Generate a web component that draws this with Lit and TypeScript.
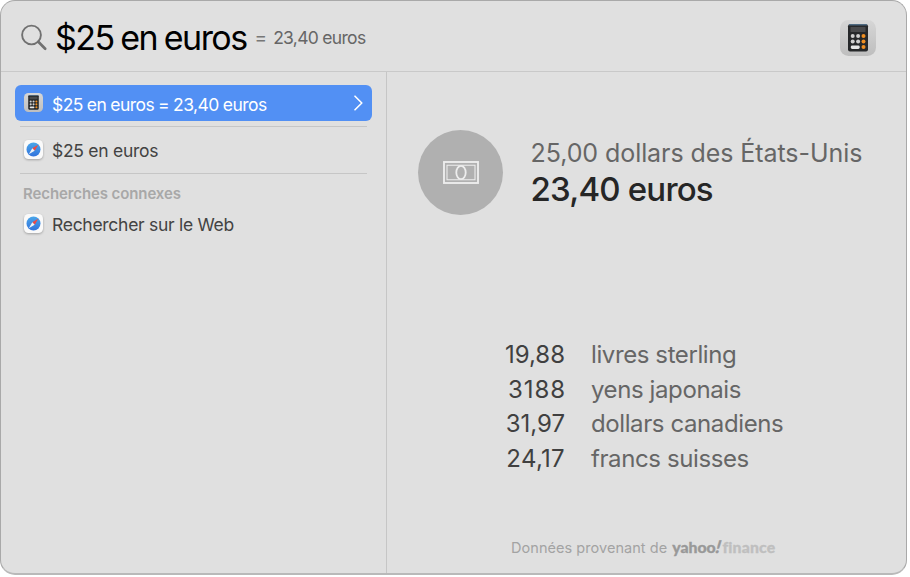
import { LitElement, html, css, svg } from "lit";
import { customElement, property } from "lit/decorators.js";

@customElement("calc-icon")
class CalcIcon extends LitElement {
  static styles = css`
    :host { display: block; flex: none; }
    svg { display: block; width: 100%; height: 100%; overflow: visible; }
  `;
  render() {
    const keys = [0, 1, 2].flatMap((r) =>
      [0, 1, 2].map((c) => {
        if (r === 2 && c < 2) {
          return c === 0
            ? svg`<rect x="10.8" y="25.4" width="8.9" height="3.6" rx="1.4" fill="#e6e6e6"/>`
            : null;
        }
        return svg`<circle cx=${12.7 + c * 5.4} cy=${16 + r * 5.5} r="2" fill=${c === 2 ? "#f08f22" : "#cfcfcf"}/>`;
      })
    );
    return html`<svg viewBox="0 0 36 36">
      <defs>
        <linearGradient id="plate" x1="0" y1="0" x2="0" y2="1">
          <stop offset="0" stop-color="#d6d6d6"/><stop offset="1" stop-color="#bebebe"/>
        </linearGradient>
      </defs>
      <rect x="0" y="0" width="36" height="36" rx="8.5" fill="url(#plate)"/>
      <rect x="8" y="4.2" width="20" height="27.4" rx="2" fill="#26282a"/>
      <rect x="9" y="4.2" width="18" height="1.2" fill="#4f6f8c"/>
      <rect x="10.5" y="7" width="15" height="5" rx="0.6" fill="#48494b"/>
      ${keys}
    </svg>`;
  }
}

@customElement("compass-icon")
class CompassIcon extends LitElement {
  static styles = css`
    :host { display: block; flex: none; }
    svg { display: block; width: 100%; height: 100%; overflow: visible; filter: drop-shadow(0 1px 1px rgba(0, 0, 0, 0.28)); }
  `;
  render() {
    return html`<svg viewBox="0 0 19 19">
      <defs>
        <linearGradient id="dial" x1="0" y1="0" x2="0" y2="1">
          <stop offset="0" stop-color="#4aa6ea"/><stop offset="1" stop-color="#3173dc"/>
        </linearGradient>
      </defs>
      <rect x="0" y="0" width="19" height="19" rx="4.4" fill="#fafafa"/>
      <circle cx="9.5" cy="9.5" r="7" fill="url(#dial)"/>
      <path d="M14.2 4.8 8.3 8.3 10.7 10.7Z" fill="#ee4a44"/>
      <path d="M4.8 14.2 8.3 8.3 10.7 10.7Z" fill="#eef2f6"/>
    </svg>`;
  }
}

@customElement("result-row")
class ResultRow extends LitElement {
  @property() label = "";
  @property() icon = "web";
  @property({ type: Boolean, reflect: true }) selected = false;

  static styles = css`
    :host { display: flex; align-items: center; height: 36px; padding: 0 9px; border-radius: 6px; color: #434343; }
    :host([selected]) { background: #5290f4; color: #fff; }
    .icon { width: 19px; height: 19px; margin: 0 9px 1px 0; }
    .label { flex: 1; font-size: 17.5px; letter-spacing: -0.28px; white-space: nowrap; }
    :host([selected]) .label { letter-spacing: -0.55px; word-spacing: -0.4px; padding-top: 2px; }
    .chevron { width: 9px; height: 16px; flex: none; }
  `;
  render() {
    return html`
      ${this.icon === "calc"
        ? html`<calc-icon class="icon"></calc-icon>`
        : html`<compass-icon class="icon"></compass-icon>`}
      <span class="label">${this.label}</span>
      ${this.selected
        ? html`<svg class="chevron" viewBox="0 0 9 16"><path d="M1 1.2 7.8 8 1 14.8" fill="none" stroke="#fff" stroke-width="1.6" stroke-linecap="round" stroke-linejoin="round"/></svg>`
        : null}
    `;
  }
}

@customElement("app-root")
class AppRoot extends LitElement {
  private rates = [
    ["19,88", "livres sterling", ""],
    ["3188", "yens japonais", "wide"],
    ["31,97", "dollars canadiens", ""],
    ["24,17", "francs suisses", "loose"],
  ];

  static styles = css`
    :host { display: block; width: 910px; height: 577px; background: #fff; overflow: hidden; font-family: Inter, "Liberation Sans", sans-serif; }
    .window { box-sizing: border-box; width: 907px; height: 575px; border: 1px solid #a9a9a9; border-bottom: 2px solid #b9b9b9; border-radius: 15px; background: #e0e0e0; display: flex; flex-direction: column; overflow: hidden; }
    .search { box-sizing: border-box; height: 71px; flex: none; border-bottom: 1px solid #c9c9c9; display: flex; align-items: center; padding: 0 30px 0 19px; white-space: nowrap; }
    .glass { width: 28px; height: 28px; margin: 3px 7px 0 0; flex: none; }
    .query { font-size: 34px; letter-spacing: -1.55px; word-spacing: -1.3px; color: #000; margin-top: 2px; }
    .equals { font-size: 19px; color: #777; margin: 3px 6px 0 8px; }
    .answer { font-size: 17.5px; letter-spacing: -0.7px; color: #666; margin-top: 3px; }
    .app { width: 36px; height: 36px; margin: 4px 0 0 auto; }
    .body { flex: 1; display: flex; min-height: 0; }
    .list { box-sizing: border-box; width: 386px; flex: none; border-right: 1px solid #c6c6c6; padding: 13px 14px 0 14px; }
    .rule { height: 1px; background: #c6c6c6; margin: 5px 5px 0; }
    .second { margin-top: 5px; }
    .heading { font-size: 15px; font-weight: 600; letter-spacing: -0.1px; line-height: 20px; color: #a8a8a8; margin: 10px 8px 2px; }
    .detail { flex: 1; display: flex; flex-direction: column; }
    .hero { display: flex; margin: 58px 0 0 31px; }
    .coin { width: 85px; height: 85px; flex: none; border-radius: 50%; background: #b0b0b0; display: flex; align-items: center; justify-content: center; }
    .note { width: 36px; height: 23px; }
    .amounts { margin: 8px 0 0 27.5px; white-space: nowrap; }
    .from { font-size: 25px; line-height: 30px; letter-spacing: -0.07px; color: #666; }
    .to { font-size: 33px; line-height: 40px; font-weight: 500; letter-spacing: -0.8px; color: #262626; margin-top: 1px; }
    .rates { display: grid; grid-template-columns: 178px 1fr; column-gap: 26px; grid-auto-rows: 34.6px; margin-top: 123.3px; font-size: 24px; line-height: 34.6px; }
    .value { text-align: right; color: #404040; letter-spacing: 0; }
    .value.wide { letter-spacing: 0.9px; margin-right: -0.9px; }
    .value.loose { letter-spacing: 0.3px; }
    .unit { color: #666; letter-spacing: -0.4px; }
    .source { display: flex; align-items: baseline; margin: auto 0 15px 124px; font-size: 14.5px; line-height: 20px; letter-spacing: 0.05px; color: #a3a3a3; white-space: nowrap; }
    .brand { font-family: Lato, sans-serif; font-weight: 900; font-size: 15.8px; letter-spacing: 0; margin-left: 5px; color: #999; -webkit-text-stroke: 0.3px; }
    .brand i { font-size: 17.5px; line-height: 1; margin-right: 2px; display: inline-block; transform: skewX(-10deg); }
    .brand .fin { color: #bfbfbf; letter-spacing: 0.15px; }
  `;

  render() {
    return html`
      <div class="window">
        <header class="search">
          <svg class="glass" viewBox="0 0 28 28" fill="none" stroke="#717171">
            <circle cx="11.5" cy="11" r="9.4" stroke-width="1.9"/>
            <path d="M18.3 17.8 25.2 24.7" stroke-width="2.7" stroke-linecap="round"/>
          </svg>
          <span class="query">$25 en euros</span>
          <span class="equals">=</span>
          <span class="answer">23,40 euros</span>
          <calc-icon class="app"></calc-icon>
        </header>
        <div class="body">
          <nav class="list">
            <result-row selected icon="calc" label="$25 en euros = 23,40 euros"></result-row>
            <div class="rule"></div>
            <result-row class="second" label="$25 en euros"></result-row>
            <div class="rule"></div>
            <div class="heading">Recherches connexes</div>
            <result-row label="Rechercher sur le Web"></result-row>
          </nav>
          <main class="detail">
            <section class="hero">
              <div class="coin">
                <svg class="note" viewBox="0 0 36 23" fill="none" stroke="#ededed">
                  <rect x="1" y="1" width="34" height="21" stroke-width="1.9"/>
                  <path d="M4 4.2H32V18.8H4Z" stroke-width="1.1"/>
                  <ellipse cx="18" cy="11.5" rx="4.7" ry="6.7" fill="#b0b0b0" stroke-width="1.8"/>
                </svg>
              </div>
              <div class="amounts">
                <div class="from">25,00 dollars des États-Unis</div>
                <div class="to">23,40 euros</div>
              </div>
            </section>
            <section class="rates">
              ${this.rates.map(([v, u, fit]) => html`<span class="value ${fit}">${v}</span><span class="unit">${u}</span>`)}
            </section>
            <footer class="source">
              <span>Données provenant de</span>
              <span class="brand">yahoo<i>!</i><span class="fin">finance</span></span>
            </footer>
          </main>
        </div>
      </div>
    `;
  }
}
